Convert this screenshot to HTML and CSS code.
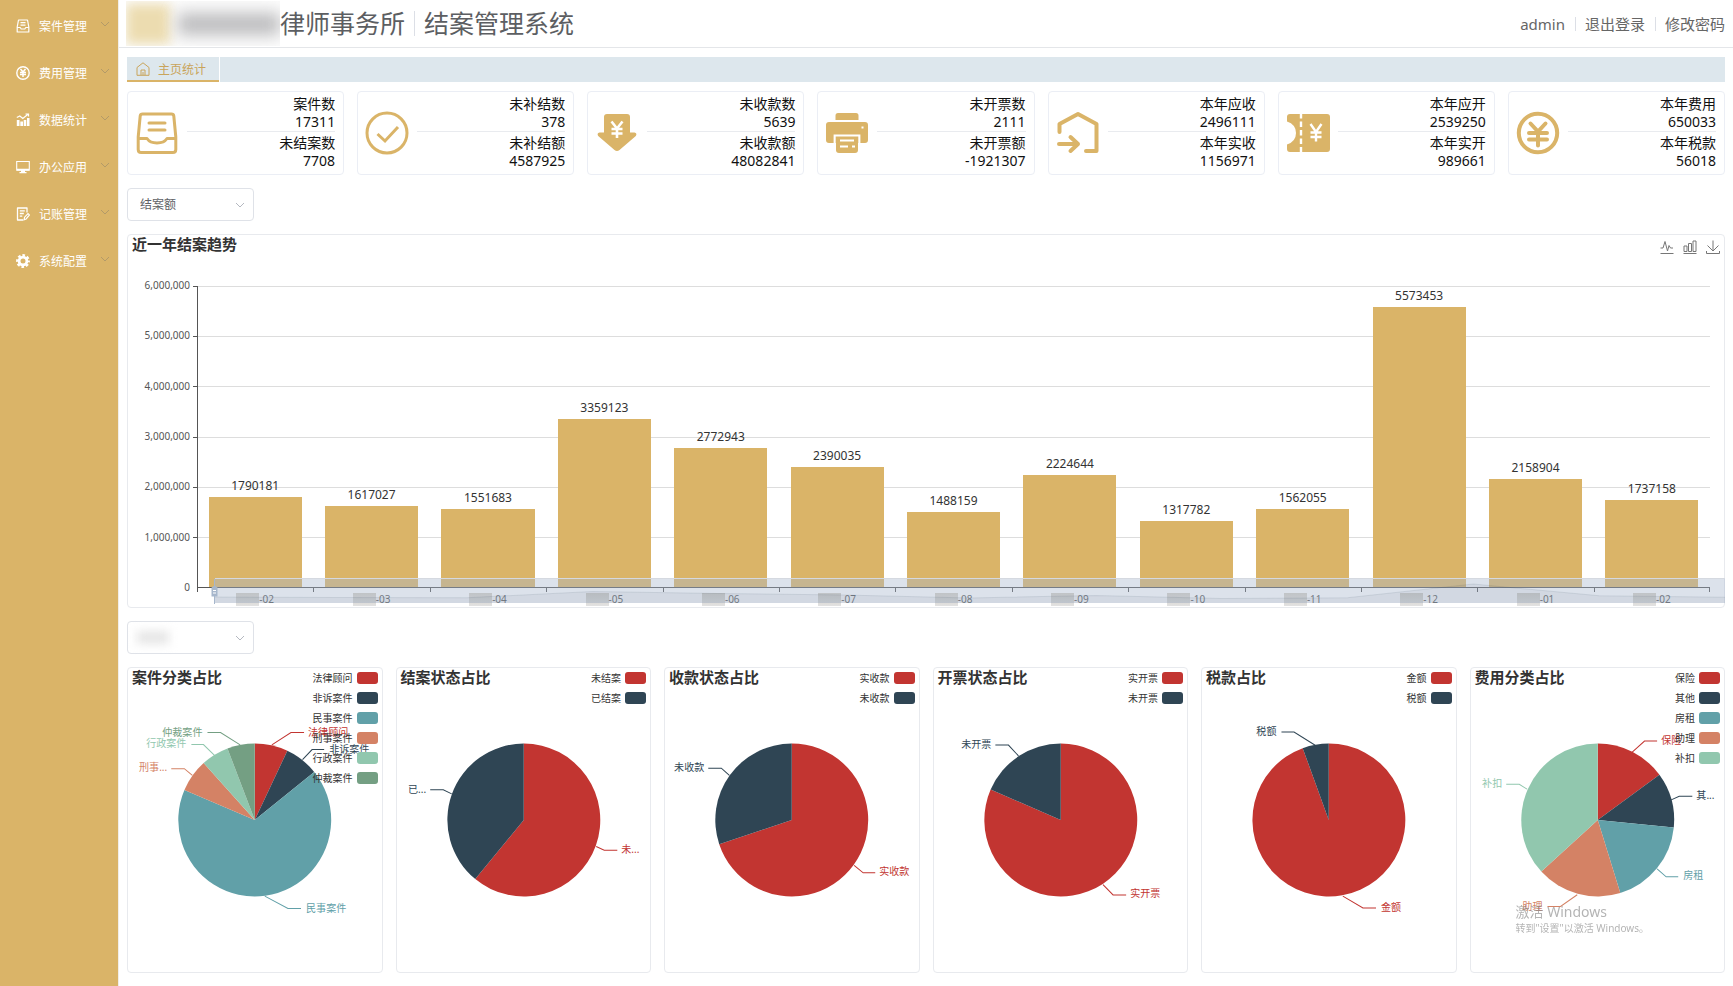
FILE: index.html
```html
<!DOCTYPE html>
<html lang="zh-CN">
<head>
<meta charset="utf-8">
<title>结案管理系统</title>
<link rel="stylesheet" href="styles.css">
</head>
<body>
<svg class="defs" aria-hidden="true">
  <symbol id="chev" viewBox="0 0 10 10"><path d="M1 3l4 4 4-4" fill="none" stroke="currentColor"/></symbol>
</svg>
<div class="app">
  <nav class="sidebar">
    <a class="menu-item" href="#"><svg class="menu-icon" viewBox="0 0 14 14"><path d="M2.500 1h9l1.300 7v5H1.200V8zM1.200 8.500h3l1 1.500h3.600l1-1.500h3M4.500 3.700h5M4.500 6.200h5" fill="none" stroke="currentColor" stroke-width="1.200" stroke-linejoin="round"/></svg><span class="menu-text">案件管理</span><svg class="menu-chev"><use href="#chev"/></svg></a>
    <a class="menu-item" href="#"><svg class="menu-icon" viewBox="0 0 14 14"><circle cx="7" cy="7" r="6.200" fill="none" stroke="currentColor" stroke-width="1.400"/><path d="M4.500 3l2.500 3 2.500-3M7 6v5M4 6.500h6M4 8.600h6" fill="none" stroke="currentColor" stroke-width="1.500"/></svg><span class="menu-text">费用管理</span><svg class="menu-chev"><use href="#chev"/></svg></a>
    <a class="menu-item" href="#"><svg class="menu-icon" viewBox="0 0 14 14"><path d="M.8 7h2.700v6H.8zM4.300 8.500H7V13H4.300zM7.700 7h2.600v6H7.700zM11 5h2.500v8H11z" fill="currentColor"/><path d="M.8 4.500l3-1.500 3 2.500L12 1.300M9.500 1h3v2.500" fill="none" stroke="currentColor" stroke-width="1.200"/></svg><span class="menu-text">数据统计</span><svg class="menu-chev"><use href="#chev"/></svg></a>
    <a class="menu-item" href="#"><svg class="menu-icon" viewBox="0 0 14 14"><path d="M.7 1.500h12.600v8.800H.7zM3.500 12.600h7" fill="none" stroke="currentColor" stroke-width="1.100"/><path d="M1 8.800h12v1.700H1zM5 10.500h4v2H5z" fill="currentColor"/></svg><span class="menu-text">办公应用</span><svg class="menu-chev"><use href="#chev"/></svg></a>
    <a class="menu-item" href="#"><svg class="menu-icon" viewBox="0 0 14 14"><path d="M11 5.500V1H1.500v12H7M3.800 3.800h5M3.800 6.500h4M3.800 9.200h2.500" fill="none" stroke="currentColor" stroke-width="1.300" stroke-linejoin="round"/><path d="M8 12.800l.6-2.600L12 6.500l1.500 1.500-3.400 4z" fill="none" stroke="currentColor" stroke-width="1.200"/></svg><span class="menu-text">记账管理</span><svg class="menu-chev"><use href="#chev"/></svg></a>
    <a class="menu-item" href="#"><svg class="menu-icon" viewBox="0 0 14 14"><circle cx="7" cy="7" r="3.900" fill="none" stroke="currentColor" stroke-width="2.800"/><circle cx="7" cy="7" r="5.700" fill="none" stroke="currentColor" stroke-width="2.400" stroke-dasharray="2.600 1.880" stroke-dashoffset="1.300"/></svg><span class="menu-text">系统配置</span><svg class="menu-chev"><use href="#chev"/></svg></a>
  </nav>

  <div class="content">
    <header class="header">
      <div class="brand">
        <span class="brand-mask"><span class="mask-logo"></span><span class="mask-name"></span></span>
        <span class="brand-firm">律师事务所</span>
        <h1 class="brand-system">结案管理系统</h1>
      </div>
      <div class="account">
        <span class="account-item">admin</span>
        <a class="account-item" href="#">退出登录</a>
        <a class="account-item" href="#">修改密码</a>
      </div>
    </header>

    <main class="main">
      <div class="top">
        <div class="tabs">
          <a class="tab" href="#"><svg class="tab-icon" viewBox="0 0 14 14"><path d="M1 13.300V5.500L7 .8l6 4.700v7.800zM5 13V8h4v5M7 10v3" fill="none" stroke="currentColor"/></svg>主页统计</a>
        </div>
        <section class="cards">
          <article class="card">
            <svg class="card-icon" viewBox="0 0 44 44"><path d="M7.500 3h29q2 0 2.300 2l2 21v12.500q0 3-3 3H6.200q-3 0-3-3V26l2-21q.3-2 2.300-2zM3.500 27.500h8.500q3 4.500 10 4.500t10-4.500h8.500M14 12h16M14 19h16" fill="none" stroke="currentColor" stroke-width="3" stroke-linecap="round" stroke-linejoin="round"/></svg>
            <div class="card-body"><dl class="stat"><dt>案件数</dt><dd>17311</dd></dl><dl class="stat"><dt>未结案数</dt><dd>7708</dd></dl></div>
          </article>
          <article class="card">
            <svg class="card-icon" viewBox="0 0 44 44"><circle cx="22" cy="22" r="20" fill="none" stroke="currentColor" stroke-width="3"/><path d="M12.500 23l7.500 7 13-14" fill="none" stroke="currentColor" stroke-width="3"/></svg>
            <div class="card-body"><dl class="stat"><dt>未补结数</dt><dd>378</dd></dl><dl class="stat"><dt>未补结额</dt><dd>4587925</dd></dl></div>
          </article>
          <article class="card">
            <svg class="card-icon" viewBox="0 0 44 44"><path d="M12 3h20q3 0 3 3v15.500h4.500q3 .8 1.300 3.500L24.500 39q-2.500 2-5 0L3.200 25q-1.700-2.700 1.300-3.500H9V6q0-3 3-3z" fill="currentColor"/><path d="M16.500 10.500l5.500 7 5.500-7M22 17.500V27M16.500 18h11M16.500 22.500h11" fill="none" stroke="#fff" stroke-width="2.600"/></svg>
            <div class="card-body"><dl class="stat"><dt>未收款数</dt><dd>5639</dd></dl><dl class="stat"><dt>未收款额</dt><dd>48082841</dd></dl></div>
          </article>
          <article class="card">
            <svg class="card-icon" viewBox="0 0 44 44"><path d="M13 2h18q2.500 0 2.500 2.500V9h-23V4.500Q10.500 2 13 2zM4 11h36q3 0 3 3v15q0 3-3 3h-6.500v-7h-23v7H4q-3 0-3-3V14q0-3 3-3z" fill="currentColor"/><path d="M11 25h22v14q0 3-3 3H14q-3 0-3-3z" fill="currentColor"/><path d="M9.500 32v-7.500h25V32M15 29.500h14M15 35.500h8M27 35.500h3M36.500 16.500h2" fill="none" stroke="#fff" stroke-width="1.800"/></svg>
            <div class="card-body"><dl class="stat"><dt>未开票数</dt><dd>2111</dd></dl><dl class="stat"><dt>未开票额</dt><dd>-1921307</dd></dl></div>
          </article>
          <article class="card">
            <svg class="card-icon" viewBox="0 0 44 44"><path d="M3.500 21v-8L22 3l18.500 10v27H30M3 33h19M14.500 26l7.500 7-7.500 7" fill="none" stroke="currentColor" stroke-width="4" stroke-linecap="round" stroke-linejoin="round"/></svg>
            <div class="card-body"><dl class="stat"><dt>本年应收</dt><dd>2496111</dd></dl><dl class="stat"><dt>本年实收</dt><dd>1156971</dd></dl></div>
          </article>
          <article class="card">
            <svg class="card-icon" viewBox="0 0 44 44"><path d="M4 3h37q3 0 3 3v32q0 3-3 3H4q-3 0-3-3v-4.500q9-3 9-11.500T1 10.500V6q0-3 3-3z" fill="currentColor"/><path d="M15 2v41" fill="none" stroke="#fff" stroke-width="2.400" stroke-dasharray="5.500 3"/><path d="M24.500 13l5.500 8 5.500-8M30 21v9.500M24.500 21.500h11M24.500 26h11" fill="none" stroke="#fff" stroke-width="2.400"/></svg>
            <div class="card-body"><dl class="stat"><dt>本年应开</dt><dd>2539250</dd></dl><dl class="stat"><dt>本年实开</dt><dd>989661</dd></dl></div>
          </article>
          <article class="card">
            <svg class="card-icon" viewBox="0 0 44 44"><circle cx="22" cy="22" r="19.200" fill="none" stroke="currentColor" stroke-width="4"/><path d="M14.500 12.500l7.500 8 7.500-8M22 21v13.500M13 22h18M13 28.500h18" fill="none" stroke="currentColor" stroke-width="4" stroke-linecap="round"/></svg>
            <div class="card-body"><dl class="stat"><dt>本年费用</dt><dd>650033</dd></dl><dl class="stat"><dt>本年税款</dt><dd>56018</dd></dl></div>
          </article>
        </section>
      </div>

      <div class="filter">
        <select class="filter-select" aria-label="统计指标"><option>结案额</option></select>
        <svg class="filter-chev"><use href="#chev"/></svg>
      </div>

      <section class="panel trend">
        <div class="trend-head">
          <h2 class="panel-title">近一年结案趋势</h2>
          <div class="tools">
            <button class="tool" aria-label="折线图"><svg viewBox="0 0 14 14"><path d="M.5 8H3l2-6.500L7.500 11 9 5.500 10.500 8H13M.5 13.500h13" fill="none" stroke="currentColor"/></svg></button>
            <button class="tool" aria-label="柱状图"><svg viewBox="0 0 14 14"><path d="M1 6h3v5.500H1zM5.500 3.500h3v8h-3zM10 1h3v10.500h-3zM.5 13.500h13" fill="none" stroke="currentColor"/></svg></button>
            <button class="tool" aria-label="下载"><svg viewBox="0 0 14 14"><path d="M7 .5V11M1.500 5.500L7 11l5.500-5.500M.5 11v2.500h13V11" fill="none" stroke="currentColor"/></svg></button>
          </div>
        </div>
        <div class="trend-body">
          <ul class="y-axis"><li>6,000,000</li><li>5,000,000</li><li>4,000,000</li><li>3,000,000</li><li>2,000,000</li><li>1,000,000</li><li>0</li></ul>
          <div class="plot">
            <div class="lines"><i></i><i></i><i></i><i></i><i></i><i></i></div>
            <div class="bars">
              <div class="bar-col"><span class="bar-label">1790181</span><div class="bar" style="height:29.836%"></div></div>
              <div class="bar-col"><span class="bar-label">1617027</span><div class="bar" style="height:26.950%"></div></div>
              <div class="bar-col"><span class="bar-label">1551683</span><div class="bar" style="height:25.861%"></div></div>
              <div class="bar-col"><span class="bar-label">3359123</span><div class="bar" style="height:55.985%"></div></div>
              <div class="bar-col"><span class="bar-label">2772943</span><div class="bar" style="height:46.216%"></div></div>
              <div class="bar-col"><span class="bar-label">2390035</span><div class="bar" style="height:39.834%"></div></div>
              <div class="bar-col"><span class="bar-label">1488159</span><div class="bar" style="height:24.803%"></div></div>
              <div class="bar-col"><span class="bar-label">2224644</span><div class="bar" style="height:37.077%"></div></div>
              <div class="bar-col"><span class="bar-label">1317782</span><div class="bar" style="height:21.963%"></div></div>
              <div class="bar-col"><span class="bar-label">1562055</span><div class="bar" style="height:26.034%"></div></div>
              <div class="bar-col"><span class="bar-label">5573453</span><div class="bar" style="height:92.891%"></div></div>
              <div class="bar-col"><span class="bar-label">2158904</span><div class="bar" style="height:35.982%"></div></div>
              <div class="bar-col"><span class="bar-label">1737158</span><div class="bar" style="height:28.953%"></div></div>
            </div>
          </div>
          <div class="x-axis">
            <span class="tick"><i class="year"></i>-02</span><span class="tick"><i class="year"></i>-03</span><span class="tick"><i class="year"></i>-04</span><span class="tick"><i class="year"></i>-05</span><span class="tick"><i class="year"></i>-06</span><span class="tick"><i class="year"></i>-07</span><span class="tick"><i class="year"></i>-08</span><span class="tick"><i class="year"></i>-09</span><span class="tick"><i class="year"></i>-10</span><span class="tick"><i class="year"></i>-11</span><span class="tick"><i class="year"></i>-12</span><span class="tick"><i class="year"></i>-01</span><span class="tick"><i class="year"></i>-02</span>
          </div>
          <div class="slider">
            <svg class="slider-data" viewBox="0 0 12 25" preserveAspectRatio="none"><path class="slider-area" d="M0 25V18.700L1 19.300 2 19.500 3 13.100 4 15.200 5 16.600 6 19.700 7 17.100 8 20.300 9 19.500 10 5.300 11 17.400 12 18.900V25z"/><path class="slider-line" d="M0 18.700L1 19.300 2 19.500 3 13.100 4 15.200 5 16.600 6 19.700 7 17.100 8 20.300 9 19.500 10 5.300 11 17.400 12 18.900"/></svg>
            <svg class="slider-handle" viewBox="0 0 7 25"><path d="M3.500 0v25" stroke="#a7b7cc"/><path d="M.5 8.500l3-2 3 2v9h-6z" fill="#a7b7cc"/><path d="M2 11.500h3M2 14h3" stroke="#fff"/></svg>
          </div>
        </div>
      </section>

      <div class="filter">
        <select class="filter-select" aria-label="年份"><option></option></select>
        <span class="filter-mask"></span>
        <svg class="filter-chev"><use href="#chev"/></svg>
      </div>

      <section class="pies">
        <article class="panel pie">
          <svg class="pie-chart" viewBox="-126 -151 252 302">
            <path class="f1" d="M0 0V-76A76 76 0 0 1 32.400-68.800z"/><path class="f2" d="M0 0L32.400-68.800A76 76 0 0 1 59.100-47.800z"/><path class="f3" d="M0 0L59.100-47.800A76 76 0 1 1-69.900-29.900z"/><path class="f4" d="M0 0L-69.900-29.900A76 76 0 0 1-50.800-56.600z"/><path class="f5" d="M0 0L-50.800-56.600A76 76 0 0 1-27.100-71z"/><path class="f6" d="M0 0L-27.100-71A76 76 0 0 1 0-76z"/>
            <path class="lead s1" d="M17-74.700L36-87H49"/><text class="f1" x="53" y="-84">法律顾问</text>
            <path class="lead s2" d="M47.500-60L57-70H69"/><text class="f2" x="74" y="-67">非诉案件</text>
            <path class="lead s3" d="M10 75.700L33 88H46"/><text class="f3" x="51" y="91">民事案件</text>
            <path class="lead s4" d="M-62-44.300L-70-51H-83"/><text class="f4 end" x="-87" y="-49">刑事...</text>
            <path class="lead s5" d="M-40-64.300L-51-75H-63"/><text class="f5 end" x="-68" y="-73">行政案件</text>
            <path class="lead s6" d="M-14.500-74.700L-34-87H-47"/><text class="f6 end" x="-52" y="-84">仲裁案件</text>
          </svg>
          <h2 class="panel-title">案件分类占比</h2>
          <ul class="legend"><li>法律顾问<i class="b1"></i></li><li>非诉案件<i class="b2"></i></li><li>民事案件<i class="b3"></i></li><li>刑事案件<i class="b4"></i></li><li>行政案件<i class="b5"></i></li><li>仲裁案件<i class="b6"></i></li></ul>
        </article>
        <article class="panel pie">
          <svg class="pie-chart" viewBox="-126 -151 252 302">
            <path class="f1" d="M0 0V-76A76 76 0 1 1-48.200 58.700z"/><path class="f2" d="M0 0L-48.200 58.700A76 76 0 0 1 0-76z"/>
            <path class="lead s1" d="M72 26.300L80 30H93"/><text class="f1" x="97" y="33">未...</text>
            <path class="lead s2" d="M-71.600-26L-80-30H-93"/><text class="f2 end" x="-97" y="-27">已...</text>
          </svg>
          <h2 class="panel-title">结案状态占比</h2>
          <ul class="legend"><li>未结案<i class="b1"></i></li><li>已结案<i class="b2"></i></li></ul>
        </article>
        <article class="panel pie">
          <svg class="pie-chart" viewBox="-126 -151 252 302">
            <path class="f1" d="M0 0V-76A76 76 0 1 1-72.100 24z"/><path class="f2" d="M0 0L-72.100 24A76 76 0 0 1 0-76z"/>
            <path class="lead s1" d="M62 45L71 52.500H83"/><text class="f1" x="87" y="55">实收款</text>
            <path class="lead s2" d="M-62-44.300L-70-51.500H-83"/><text class="f2 end" x="-87" y="-49">未收款</text>
          </svg>
          <h2 class="panel-title">收款状态占比</h2>
          <ul class="legend"><li>实收款<i class="b1"></i></li><li>未收款<i class="b2"></i></li></ul>
        </article>
        <article class="panel pie">
          <svg class="pie-chart" viewBox="-126 -151 252 302">
            <path class="f1" d="M0 0V-76A76 76 0 1 1-69.700-30.200z"/><path class="f2" d="M0 0L-69.700-30.200A76 76 0 0 1 0-76z"/>
            <path class="lead s1" d="M42 64.300L52 74.500H65"/><text class="f1" x="69" y="77">实开票</text>
            <path class="lead s2" d="M-42-63.700L-52-74.500H-65"/><text class="f2 end" x="-69" y="-72">未开票</text>
          </svg>
          <h2 class="panel-title">开票状态占比</h2>
          <ul class="legend"><li>实开票<i class="b1"></i></li><li>未开票<i class="b2"></i></li></ul>
        </article>
        <article class="panel pie">
          <svg class="pie-chart" viewBox="-126 -151 252 302">
            <path class="f1" d="M0 0V-76A76 76 0 1 1-25.900-71.400z"/><path class="f2" d="M0 0L-25.900-71.400A76 76 0 0 1 0-76z"/>
            <path class="lead s1" d="M14 75.700L34 87.500H47"/><text class="f1" x="52" y="90">金额</text>
            <path class="lead s2" d="M-13.500-74.300L-34.500-87.500H-47"/><text class="f2 end" x="-52" y="-85">税额</text>
          </svg>
          <h2 class="panel-title">税款占比</h2>
          <ul class="legend"><li>金额<i class="b1"></i></li><li>税额<i class="b2"></i></li></ul>
        </article>
        <article class="panel pie">
          <svg class="pie-chart" viewBox="-126 -151 252 302">
            <path class="f1" d="M0 0V-76A76 76 0 0 1 61.300-45z"/><path class="f2" d="M0 0L61.300-45A76 76 0 0 1 75.600 7.500z"/><path class="f3" d="M0 0L75.600 7.500A76 76 0 0 1 22.400 72.600z"/><path class="f4" d="M0 0L22.400 72.600A76 76 0 0 1-56.100 51.300z"/><path class="f5" d="M0 0L-56.100 51.300A76 76 0 0 1 0-76z"/>
            <path class="lead s1" d="M34-67.300L46.500-78.500H59"/><text class="f1" x="63" y="-76">保险</text>
            <path class="lead s2" d="M73-20L81-23.500H94"/><text class="f2" x="98" y="-21">其...</text>
            <path class="lead s3" d="M59 48.700L68 56.500H80"/><text class="f3" x="85" y="59">房租</text>
            <path class="lead s4" d="M-20.400 74.300L-37 86H-50"/><text class="f4 end" x="-55" y="89">助理</text>
            <path class="lead s5" d="M-70.300-30.700L-78-35.500H-91"/><text class="f5 end" x="-95" y="-33">补扣</text>
          </svg>
          <h2 class="panel-title">费用分类占比</h2>
          <ul class="legend"><li>保险<i class="b1"></i></li><li>其他<i class="b2"></i></li><li>房租<i class="b3"></i></li><li>助理<i class="b4"></i></li><li>补扣<i class="b5"></i></li></ul>
        </article>
      </section>
    </main>
  </div>
</div>
<div class="watermark"><p class="wm-title">激活 Windows</p><p class="wm-text">转到"设置"以激活 Windows。</p></div>
</body>
</html>
```
FILE: styles.css
```css
* { box-sizing: border-box; }
body, h1, h2, ul, dl, dd, p { margin: 0; padding: 0; }
body {
  font-family: "Noto Sans", "Noto Sans CJK SC", sans-serif;
  font-size: 12px;
  color: #111;
  background: #fff;
}
ul { list-style: none; }
a { color: inherit; text-decoration: none; }
.defs { position: absolute; width: 0; height: 0; }

.app { display: flex; min-height: 100vh; }

/* sidebar */
.sidebar { flex: 0 0 118px; padding-top: 2px; background: #dab468; color: #fff; }
.menu-item { display: flex; align-items: center; height: 47px; padding: 0 8px 0 16px; }
.menu-icon { width: 14px; height: 14px; margin-right: 9px; }
.menu-text { flex: 1; }
.menu-chev { width: 10px; height: 10px; margin-bottom: 4px; color: #b39a68; }

/* header */
.content { flex: 1; min-width: 0; border-left: 1px solid #f0eeea; }
.header {
  display: flex; justify-content: space-between; align-items: center;
  height: 48px; padding: 0 8px 0 7px; border-bottom: 1px solid #e4e6e9; color: #5c5e62;
}
.brand { display: flex; align-items: center; font-size: 25px; line-height: 36px; }
.brand-mask { display: flex; align-items: center; gap: 8px; width: 154px; height: 45px; overflow: hidden; background: #fcfcfc; }
.mask-logo { width: 44px; height: 40px; background: #ecdcb0; filter: blur(6px); }
.mask-name { flex: 1; height: 22px; background: #bcbcbe; filter: blur(8px); }
.brand-firm { padding-right: 9px; border-right: 1px solid #dcdfe6; line-height: 25px; }
.brand-system { padding-left: 9px; font-size: 25px; line-height: 25px; font-weight: 400; }
.account { display: flex; align-items: center; font-size: 15px; line-height: 14px; color: #666; }
.account-item + .account-item { margin-left: 10px; padding-left: 9px; border-left: 1px solid #dcdfe6; }

/* page body */
.main { display: flex; flex-direction: column; gap: 13px; padding: 9px 8px 13px; }
.top { display: flex; flex-direction: column; gap: 9px; }
.tabs { display: flex; height: 25px; background: #dde7ed; }
.tab {
  display: flex; align-items: center; gap: 8px; padding: 0 13px 0 9px;
  color: #c9a45a; border-bottom: 2px solid #dab468; box-shadow: 1px 0 #fff;
}
.tab-icon { width: 14px; height: 14px; }

.cards { display: grid; grid-template-columns: repeat(7, 1fr); gap: 13px; }
.card {
  display: flex; align-items: center; gap: 8px; padding: 3px 8px 4px 7px;
  border: 1px solid #ebeef5; border-radius: 4px;
}
.card-icon { width: 44px; height: 44px; color: #dab468; }
.card-body { flex: 1; text-align: right; font-size: 14px; line-height: 18px; }
.stat + .stat { padding-top: 2px; border-top: 1px solid #e9ebef; }

.filter { position: relative; width: 127px; }
.filter-select {
  display: block; appearance: none; width: 100%; height: 33px; padding: 0 28px 0 12px;
  font: inherit; color: #606266; background: #fff; border: 1px solid #dfe2e8; border-radius: 4px;
}
.filter-chev { position: absolute; right: 9px; top: 12px; width: 10px; height: 10px; color: #b4b8c0; }
.filter-mask { position: absolute; left: 10px; top: 10px; width: 32px; height: 13px; background: #e6e6e6; filter: blur(5px); }

.panel { border: 1px solid #e8eaee; border-radius: 4px; }
.panel-title { font-size: 15px; line-height: 18px; font-weight: 700; color: #333; }

/* trend chart */
.trend-head { display: flex; justify-content: space-between; height: 51px; padding: 0 4px; }
.tools { display: flex; align-items: flex-start; gap: 9px; padding-top: 5px; }
.tool { width: 14px; height: 14px; padding: 0; border: 0; background: none; color: #777; }
.tool svg { display: block; width: 14px; height: 14px; }
.trend-body {
  position: relative; display: grid; grid-template: 302px 19px / 69px 1fr; padding-right: 14px;
}
.y-axis {
  display: flex; flex-direction: column; justify-content: space-between; margin: -8px 7px -6px 0;
  font-size: 10px; line-height: 14px; text-align: right; color: #555;
}
.plot { position: relative; border-left: 1px solid #555; border-bottom: 1px solid #555; }
.lines { position: absolute; inset: 0; display: grid; grid-template-rows: repeat(6, 1fr); }
.lines i { position: relative; border-top: 1px solid #ddd; }
.lines i::before { content: ""; position: absolute; left: -5px; top: -1px; width: 5px; height: 1px; background: #555; }
.bars { position: relative; display: flex; height: 100%; margin-left: -1px; }
.bar-col { flex: 1; display: flex; flex-direction: column; justify-content: flex-end; align-items: center; }
.bar-label { font-size: 12px; line-height: 16px; padding-bottom: 3px; color: #333; }
.bar { width: 80%; background: #dab468; }
.x-axis { grid-column: 2; display: flex; font-size: 10px; line-height: 14px; color: #555; }
.tick {
  flex: 1; display: flex; justify-content: center; align-items: center; height: 19px; padding-top: 3px;
  background: linear-gradient(#555, #555) left top / 1px 4px no-repeat;
}
.tick:last-child { background: linear-gradient(#555, #555) left top / 1px 4px no-repeat, linear-gradient(#555, #555) right top / 1px 4px no-repeat; }
.year { width: 23px; height: 13px; background: linear-gradient(#d2cdc2, #e2e2e2); }
.slider {
  position: absolute; left: 87px; right: -1px; bottom: 4px; height: 25px;
  background: rgba(167, 183, 204, .4); border-top: 1px solid #d5d9e0;
}
.slider-data { display: block; width: 100%; height: 100%; }
.slider-area { fill: rgba(47, 69, 84, .06); }
.slider-line { fill: none; stroke: rgba(47, 69, 84, .1); vector-effect: non-scaling-stroke; }
.slider-handle { position: absolute; left: -4px; top: 0; width: 7px; height: 25px; }

/* pie charts */
.pies { display: grid; grid-template-columns: repeat(6, 1fr); gap: 13px; }
.pie { position: relative; height: 306px; padding: 0 4px; }
.pie-chart { position: absolute; inset: 0; width: 100%; height: 100%; font-size: 10px; }
.pie .panel-title { position: relative; }
.legend { position: absolute; right: 4px; top: 4px; display: flex; flex-direction: column; gap: 8px; font-size: 10px; line-height: 12px; color: #333; }
.legend li { display: flex; justify-content: flex-end; align-items: center; gap: 4px; }
.legend i { width: 21px; height: 12px; border-radius: 3px; }
.end { text-anchor: end; }
.lead { fill: none; stroke-width: 1; }
.f1 { fill: #c23531; } .f2 { fill: #2f4554; } .f3 { fill: #61a0a8; } .f4 { fill: #d48265; } .f5 { fill: #91c7ae; } .f6 { fill: #749f83; }
.s1 { stroke: #c23531; } .s2 { stroke: #2f4554; } .s3 { stroke: #61a0a8; } .s4 { stroke: #d48265; } .s5 { stroke: #91c7ae; } .s6 { stroke: #749f83; }
.b1 { background: #c23531; } .b2 { background: #2f4554; } .b3 { background: #61a0a8; } .b4 { background: #d48265; } .b5 { background: #91c7ae; } .b6 { background: #749f83; }

.watermark { position: fixed; right: 84px; bottom: 51px; color: rgba(130, 130, 130, .6); pointer-events: none; }
.wm-title { font-size: 14px; line-height: 18px; }
.wm-text { font-size: 10px; line-height: 14px; }
```
